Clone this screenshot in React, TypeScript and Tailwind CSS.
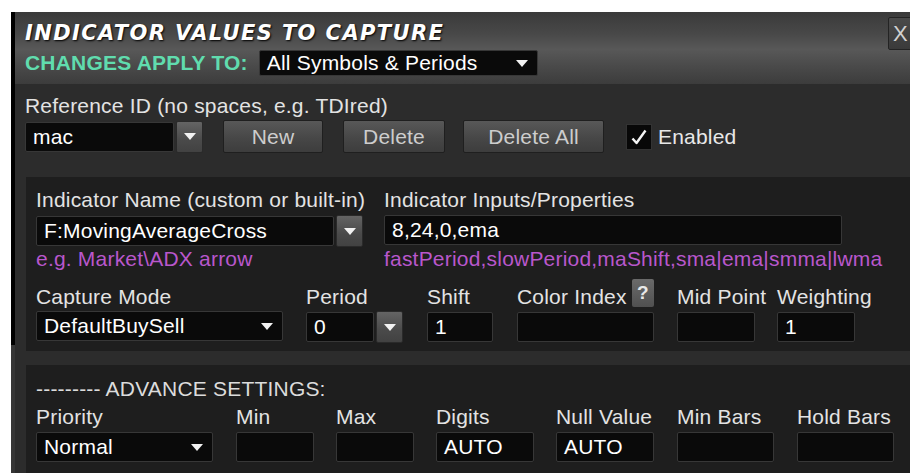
import React from 'react';

type BoxProps = { className?: string; value?: string };

// small white "down" triangle used by every dropdown
const Arrow = () => (
  <svg width="12" height="7" viewBox="0 0 12 7" className="shrink-0">
    <path d="M0 0H12L6 7Z" fill="#f2f2f2" />
  </svg>
);

const TextBox = ({ className = '', value = '' }: BoxProps) => (
  <div
    className={`h-[30px] bg-[#0a0a0a] border border-[#373737] rounded-[2px] pl-[7px] flex items-center text-white whitespace-nowrap overflow-hidden ${className}`}
  >
    {value}
  </div>
);

const DropButton = () => (
  <div className="w-[27px] h-[32px] shrink-0 rounded-[2px] border border-[#2a2a2a] bg-[linear-gradient(180deg,#646464,#4a4a4a_60%,#424242)] flex items-center justify-center">
    <Arrow />
  </div>
);

// text box with a separate arrow button on its right
const Combo = ({ className = '', value = '' }: BoxProps) => (
  <div className="flex items-center gap-[2px]">
    <TextBox className={className} value={value} />
    <DropButton />
  </div>
);

// black select with the arrow drawn inside
const SelectBox = ({ className = '', value = '' }: BoxProps) => (
  <div
    className={`bg-[#0a0a0a] border border-[#373737] rounded-[2px] pl-[7px] pr-[9px] flex items-center justify-between text-white whitespace-nowrap ${className}`}
  >
    <span>{value}</span>
    <Arrow />
  </div>
);

const Button = ({ className = '', label }: { className?: string; label: string }) => (
  <div
    className={`h-[33px] rounded-[2px] border border-[#1f1f1f] bg-[linear-gradient(180deg,#585858,#474747_55%,#3d3d3d)] text-[#cdcdcd] flex items-center justify-center ${className}`}
  >
    {label}
  </div>
);

const Field = ({
  className = '',
  label,
  extra,
  gap = 'mt-[2px]',
  children,
}: {
  className?: string;
  label: string;
  extra?: React.ReactNode;
  gap?: string;
  children: React.ReactNode;
}) => (
  <div className={`flex flex-col shrink-0 ${className}`}>
    <div className="h-[24px] leading-[24px] flex items-start text-[#e3e3e3] whitespace-nowrap">
      {label}
      {extra}
    </div>
    <div className={gap}>{children}</div>
  </div>
);

export default function App() {
  return (
    <div className="w-[910px] h-[473px] overflow-hidden bg-white font-['Liberation_Sans',Arial,sans-serif] text-[21px] tracking-[0.2px]">
      <div className="ml-[11px] mt-[12px] w-[930px] h-[470px] flex">
        {/* window frame edge */}
        <div className="w-[4px] flex flex-col">
          <div className="h-[333px] bg-black" />
          <div className="flex-1 bg-[#363636]" />
        </div>

        <div className="flex-1 flex flex-col bg-[#2c2c2c]">
          {/* title bar */}
          <div className="h-[72px] shrink-0 flex bg-[linear-gradient(180deg,#3a3a3a_0%,#484848_30%,#585858_52%,#4a4a4a_75%,#3c3c3c_100%)] pl-[10px]">
            <div className="flex-1 pt-[8px]">
              <div className="h-[26px] leading-[26px] font-['DejaVu_Sans',sans-serif] font-bold italic text-[21px] tracking-[1.4px] text-white [text-shadow:1px_1px_2px_#000]">
                INDICATOR VALUES TO CAPTURE
              </div>
              <div className="mt-[4px] flex items-center">
                <span className="font-bold text-[#60dcae] leading-[26px]">CHANGES APPLY TO:</span>
                <SelectBox className="ml-[11px] w-[279px] h-[26px] border-[#202020]" value="All Symbols & Periods" />
              </div>
            </div>
            <div className="mt-[5px] mr-[21px] w-[32px] h-[33px] rounded-[2px] border border-[#232323] bg-[linear-gradient(180deg,#4a4a4a,#3a3a3a)] text-[#d0d0d0] text-[22px] pl-[4px] flex items-center">
              X
            </div>
          </div>

          {/* body */}
          <div className="pl-[10px] pt-[10px] flex flex-col">
            <div className="h-[24px] leading-[24px] text-[#e3e3e3]">Reference ID (no spaces, e.g. TDIred)</div>
            <div className="mt-[2px] flex items-center">
              <Combo className="w-[149px]" value="mac" />
              <Button className="ml-[20px] w-[100px]" label="New" />
              <Button className="ml-[20px] w-[102px]" label="Delete" />
              <Button className="ml-[18px] w-[141px]" label="Delete All" />
              <div className="ml-[22px] w-[26px] h-[26px] bg-[#080808] border border-[#333] flex items-center justify-center">
                <svg width="18" height="18" viewBox="0 0 18 18">
                  <path d="M2.5 10.5L6.5 15L15.5 2.5" fill="none" stroke="#f4f4f4" strokeWidth="2.4" strokeLinejoin="round" />
                </svg>
              </div>
              <span className="ml-[6px] text-[#e8e8e8]">Enabled</span>
            </div>

            {/* indicator panel */}
            <div className="mt-[24px] ml-[1px] bg-[#1e1e1e] pl-[10px] pt-[11px] pb-[8px]">
              <div className="flex">
                <Field className="w-[327px]" label="Indicator Name (custom or built-in)" gap="mt-[3px]">
                  <Combo className="w-[298px]" value="F:MovingAverageCross" />
                </Field>
                <Field className="ml-[21px]" label="Indicator Inputs/Properties" gap="mt-[3px]">
                  <TextBox className="w-[458px]" value="8,24,0,ema" />
                </Field>
              </div>
              <div className="flex h-[24px] leading-[24px] text-[#b957cc] whitespace-nowrap">
                <span className="w-[327px]">e.g. Market\ADX arrow</span>
                <span className="ml-[21px]">fastPeriod,slowPeriod,maShift,sma|ema|smma|lwma</span>
              </div>

              <div className="mt-[14px] flex">
                <Field className="w-[247px]" label="Capture Mode">
                  <SelectBox className="h-[30px] w-[247px]" value="DefaultBuySell" />
                </Field>
                <Field className="ml-[23px]" label="Period">
                  <Combo className="w-[68px]" value="0" />
                </Field>
                <Field className="ml-[24px] w-[66px]" label="Shift">
                  <TextBox className="w-[66px] mt-[1px]" value="1" />
                </Field>
                <Field
                  className="ml-[24px] w-[137px]"
                  label="Color Index"
                  extra={
                    <span className="ml-[5px] -mt-[6px] w-[25px] h-[28px] rounded-[2px] bg-[linear-gradient(180deg,#6a6a6a,#505050)] text-[#e8e8e8] font-bold text-[19px] leading-[28px] text-center">
                      ?
                    </span>
                  }
                >
                  <TextBox className="w-[137px] mt-[1px]" />
                </Field>
                <Field className="ml-[23px] w-[78px]" label="Mid Point">
                  <TextBox className="w-[78px] mt-[1px]" />
                </Field>
                <Field className="ml-[22px] w-[78px]" label="Weighting">
                  <TextBox className="w-[78px] mt-[1px]" value="1" />
                </Field>
              </div>
            </div>

            {/* advanced panel */}
            <div className="mt-[14px] ml-[1px] h-[120px] bg-[#1e1e1e] pl-[10px] pt-[12px]">
              <div className="h-[24px] leading-[24px] text-[#dcdcdc]">--------- ADVANCE SETTINGS:</div>
              <div className="mt-[4px] flex">
                <Field className="w-[177px]" label="Priority" gap="mt-[3px]">
                  <SelectBox className="h-[30px] w-[177px]" value="Normal" />
                </Field>
                <Field className="ml-[23px] w-[78px]" label="Min" gap="mt-[3px]">
                  <TextBox className="w-[78px]" />
                </Field>
                <Field className="ml-[22px] w-[78px]" label="Max" gap="mt-[3px]">
                  <TextBox className="w-[78px]" />
                </Field>
                <Field className="ml-[22px] w-[98px]" label="Digits" gap="mt-[3px]">
                  <TextBox className="w-[98px]" value="AUTO" />
                </Field>
                <Field className="ml-[22px] w-[98px]" label="Null Value" gap="mt-[3px]">
                  <TextBox className="w-[98px]" value="AUTO" />
                </Field>
                <Field className="ml-[23px] w-[97px]" label="Min Bars" gap="mt-[3px]">
                  <TextBox className="w-[97px]" />
                </Field>
                <Field className="ml-[23px] w-[97px]" label="Hold Bars" gap="mt-[3px]">
                  <TextBox className="w-[97px]" />
                </Field>
              </div>
            </div>
          </div>
        </div>
      </div>
    </div>
  );
}
